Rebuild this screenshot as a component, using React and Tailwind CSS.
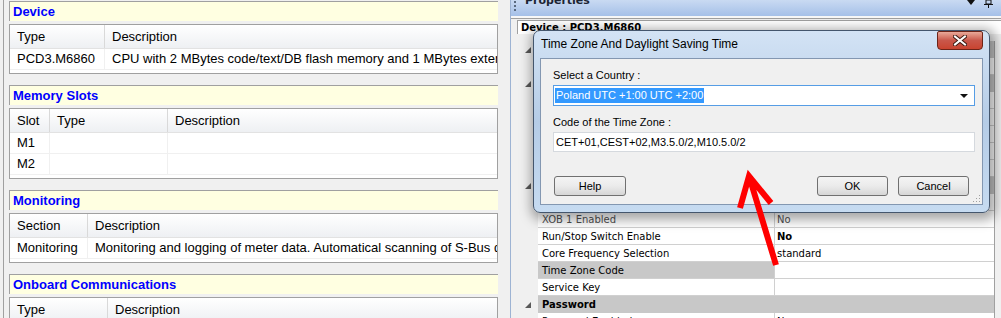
import React from 'react';

const sans = "font-['Liberation_Sans',Arial,sans-serif]";
const grid = "font-['DejaVu_Sans',Verdana,sans-serif]";

const SectionHeader = ({ title }) => (
  <div className="flex h-[20px] items-center border-l border-t border-[#a0a0a0] bg-[#ffffe1] pl-[3px]">
    <span className="text-[13px] font-bold text-[#0000ff]">{title}</span>
  </div>
);

const Table = ({ cols, rows }) => (
  <div className="mt-[3px] border border-[#a0a0a0] bg-white pb-[3px]">
    <div className="flex h-[24px] border-b border-[#e2e2e2] bg-linear-to-b from-white to-[#eef0f3]">
      {cols.map((c, i) => (
        <div
          key={i}
          className={`flex items-center overflow-hidden whitespace-nowrap px-[7px] ${c.w} ${i < cols.length - 1 ? 'border-r border-[#d9d9d9]' : ''}`}
        >
          {c.label}
        </div>
      ))}
    </div>
    {rows.map((r, ri) => (
      <div key={ri} className="flex h-[21px] border-b border-[#f0f0f0]">
        {cols.map((c, i) => (
          <div
            key={i}
            className={`flex items-center overflow-hidden whitespace-nowrap px-[7px] ${c.w} ${i < cols.length - 1 ? 'border-r border-[#f0f0f0]' : ''}`}
          >
            {r[i]}
          </div>
        ))}
      </div>
    ))}
  </div>
);

const Tri = () => (
  <svg width="6" height="6" viewBox="0 0 6 6">
    <polygon points="6,0 6,6 0,6" fill="#595959" />
  </svg>
);

const PropRow = ({ name, value, cat, sel, bold, dim }) => (
  <div className="flex h-[17px]">
    <div className="flex w-[21px] items-center justify-center">{cat && <Tri />}</div>
    {cat ? (
      <div className="flex flex-1 items-center border-b border-[#c8c8c8] bg-[#c8c8c8] pl-[4px] font-bold">{name}</div>
    ) : (
      <>
        <div
          className={`flex w-[237px] items-center overflow-hidden whitespace-nowrap border-b border-r border-[#d0d0d0] pl-[4px] ${sel ? 'bg-[#c8c8c8]' : 'bg-white'} ${dim ? 'text-[#505050]' : ''}`}
        >
          {name}
        </div>
        <div
          className={`flex flex-1 items-center overflow-hidden whitespace-nowrap border-b border-[#d0d0d0] bg-white pl-[2px] ${bold ? 'font-bold' : ''} ${dim ? 'text-[#505050]' : ''}`}
        >
          {value}
        </div>
      </>
    )}
  </div>
);

const props = [
  { name: 'General', cat: true },
  { name: 'Device Type', value: 'PCD3.M6860' },
  { name: 'Hardware', cat: true },
  { name: 'Program Memory', value: '2 MBytes' },
  { name: 'Data Memory', value: '1 MBytes' },
  { name: 'Onboard Memory', value: 'Flash' },
  { name: 'Memory Slot M1', value: '' },
  { name: 'Memory Slot M2', value: '' },
  { name: 'Settings', cat: true },
  { name: 'Watchdog Enabled', value: 'No' },
  { name: 'XOB 1 Enabled', value: 'No', dim: true },
  { name: 'Run/Stop Switch Enable', value: 'No', bold: true },
  { name: 'Core Frequency Selection', value: 'standard' },
  { name: 'Time Zone Code', value: '', sel: true },
  { name: 'Service Key', value: '' },
  { name: 'Password', cat: true },
  { name: 'Password Enabled', value: 'No' },
];

const Btn = ({ label, w }) => (
  <div
    className={`flex h-[20px] items-center justify-center rounded-[3px] border border-[#707070] bg-linear-to-b from-[#f4f4f4] via-[#ebebeb] to-[#d6d6d6] ${w}`}
  >
    {label}
  </div>
);

export default function App() {
  return (
    <div className={`relative flex h-[318px] w-[1001px] overflow-hidden bg-[#f0f0f0] text-black ${sans}`}>
      {/* left report */}
      <div className="ml-[3px] w-[507px] flex-none border-l border-[#a0a0a0] pl-[5px] pr-[12px] pt-[1px] text-[13px]">
        <SectionHeader title="Device" />
        <Table
          cols={[{ label: 'Type', w: 'w-[95px]' }, { label: 'Description', w: 'flex-1' }]}
          rows={[['PCD3.M6860', 'CPU with 2 MBytes code/text/DB flash memory and 1 MBytes extension memory']]}
        />
        <div className="h-[11px]" />
        <SectionHeader title="Memory Slots" />
        <Table
          cols={[
            { label: 'Slot', w: 'w-[40px]' },
            { label: 'Type', w: 'w-[118px]' },
            { label: 'Description', w: 'flex-1' },
          ]}
          rows={[['M1', '', ''], ['M2', '', '']]}
        />
        <div className="h-[11px]" />
        <SectionHeader title="Monitoring" />
        <Table
          cols={[{ label: 'Section', w: 'w-[78px]' }, { label: 'Description', w: 'flex-1' }]}
          rows={[['Monitoring', 'Monitoring and logging of meter data. Automatical scanning of S-Bus devices']]}
        />
        <div className="h-[11px]" />
        <SectionHeader title="Onboard Communications" />
        <Table
          cols={[{ label: 'Type', w: 'w-[98px]' }, { label: 'Description', w: 'flex-1' }]}
          rows={[['', '']]}
        />
      </div>

      {/* properties panel */}
      <div className={`w-[491px] flex-none overflow-hidden border-l border-[#9db3d3] ${grid} text-[10px]`}>
        <div className="flex h-[16px] items-start bg-linear-to-b from-[#c9daf2] to-[#a5c0e8]">
          <div className="ml-[3px] mt-[1px] h-[10px] border-l-2 border-dotted border-[#5a6a80]" />
          <span className="-mt-[6px] ml-[9px] text-[11px] font-bold leading-[14px] text-[#1b2433]">Properties</span>
          <div className="ml-auto mr-[8px] flex items-start gap-[9px]">
            <svg width="8" height="5" viewBox="0 0 8 5">
              <polygon points="0,0 8,0 4,5" fill="#111" />
            </svg>
            <svg width="9" height="8" viewBox="0 0 9 8">
              <rect x="2" y="0" width="5" height="4" fill="none" stroke="#111" />
              <line x1="0" y1="4.5" x2="9" y2="4.5" stroke="#111" />
              <line x1="4.5" y1="4" x2="4.5" y2="8" stroke="#111" />
            </svg>
          </div>
        </div>
        <div className="h-[3px] border-b border-[#a0a0a0] bg-[#f7f7f7]" />
        <div className="ml-[6px] mt-[1px] flex h-[14px] items-center border-l border-t border-[#a0a0a0] bg-white pl-[3px] font-bold">
          Device : PCD3.M6860
        </div>
        <div className="ml-[6px] mr-[6px] mt-[7px] border-r border-[#a0a0a0]">
          {props.map((p, i) => (
            <PropRow key={i} {...p} />
          ))}
        </div>
      </div>

      {/* dialog */}
      <div className="absolute left-[533px] top-[30px] h-[183px] w-[457px] rounded-[7px] border border-[#44566d] bg-linear-to-b from-[#d3e3f5] via-[#b5cce6] to-[#c6dbf1] shadow-[2px_3px_12px_4px_rgba(0,0,0,0.35)]">
        <div className="flex h-[27px] items-start justify-between pr-[6px]">
          <span className="pl-[7px] pt-[6px] text-[12px] leading-[14px] text-black">Time Zone And Daylight Saving Time</span>
          <div className="flex h-[19px] w-[46px] items-center justify-center rounded-b-[4px] rounded-t-[2px] border border-[#6d2418] bg-linear-to-b from-[#e9a999] via-[#c9574a] to-[#c9432f]">
            <svg width="14" height="11" viewBox="0 0 14 11">
              <path d="M2 1.5 L12 9.5 M12 1.5 L2 9.5" stroke="#3d1a12" strokeWidth="4" strokeLinecap="square" />
              <path d="M2 1.5 L12 9.5 M12 1.5 L2 9.5" stroke="#ffffff" strokeWidth="2" strokeLinecap="square" />
            </svg>
          </div>
        </div>
        <div className="relative mx-[6px] h-[147px] border border-[#8397b1] bg-[#f0f0f0] pl-[12px] pr-[7px] pt-[9px] text-[11px]">
          <div className="leading-[14px]">Select a Country :</div>
          <div className="mt-[3px] flex h-[21px] items-center border border-[#569de5] bg-white pl-[1px] pr-[6px]">
            <span className="bg-[#3399ff] px-[1px] leading-[15px] text-white">Poland UTC +1:00 UTC +2:00</span>
            <svg className="ml-auto" width="8" height="4" viewBox="0 0 8 4">
              <polygon points="0,0 8,0 4,4" fill="#111" />
            </svg>
          </div>
          <div className="mt-[9px] leading-[14px]">Code of the Time Zone :</div>
          <div className="mt-[3px] flex h-[20px] items-center border border-[#d5d9de] bg-white pl-[2px]">
            CET+01,CEST+02,M3.5.0/2,M10.5.0/2
          </div>
          <div className="mt-[24px] flex items-center justify-between pl-[1px] pr-[6px]">
            <Btn label="Help" w="w-[72px]" />
            <div className="flex gap-[10px]">
              <Btn label="OK" w="w-[71px]" />
              <Btn label="Cancel" w="w-[71px]" />
            </div>
          </div>
          <svg className="absolute bottom-[1px] right-[1px]" width="8" height="8" viewBox="0 0 8 8">
            <rect x="6" y="0" width="1" height="1" fill="#a0a0a0" />
            <rect x="3" y="3" width="1" height="1" fill="#a0a0a0" />
            <rect x="6" y="3" width="1" height="1" fill="#a0a0a0" />
            <rect x="0" y="6" width="1" height="1" fill="#a0a0a0" />
            <rect x="3" y="6" width="1" height="1" fill="#a0a0a0" />
            <rect x="6" y="6" width="1" height="1" fill="#a0a0a0" />
          </svg>
        </div>
      </div>

      {/* red arrow */}
      <svg className="pointer-events-none absolute left-0 top-0" width="1001" height="318">
        <path
          d="M776 265 L749 176 M740 208 L749 176 L771 203"
          fill="none"
          stroke="#ff0000"
          strokeWidth="6"
          strokeLinejoin="miter"
        />
      </svg>
    </div>
  );
}
